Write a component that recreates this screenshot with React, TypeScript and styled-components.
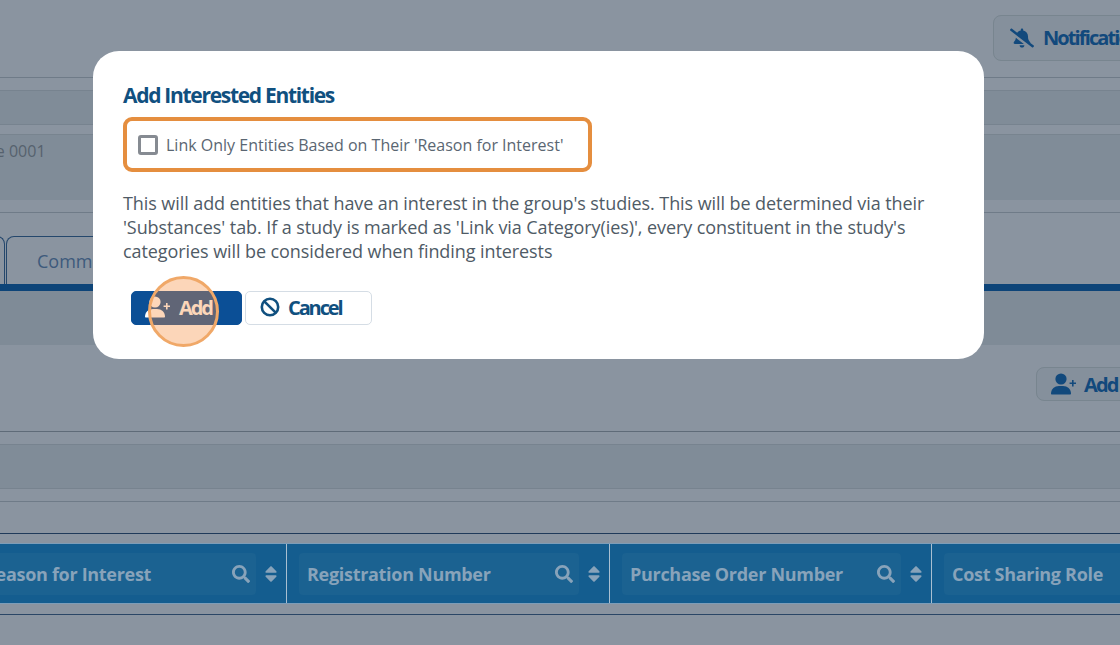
import React from "react";
import styled, { createGlobalStyle } from "styled-components";
import { FaBellSlash, FaSearch, FaSort } from "react-icons/fa";

const colors = {
  page: "#8a94a0",
  darkBand: "#808c98",
  navy: "#12497c",
  title: "#10507f",
  header: "#145d8f",
  headerInput: "#1b6291",
  headerText: "#88a3ba",
  orange: "#e58e3f",
};

const GlobalStyle = createGlobalStyle`
  html, body {
    margin: 0;
    padding: 0;
    width: 1120px;
    height: 645px;
    overflow: hidden;
    background: ${colors.page};
    font-family: "Open Sans", "Liberation Sans", sans-serif;
  }
`;

const Page = styled.div`
  position: relative;
  display: flex;
  flex-direction: column;
  width: 1120px;
  height: 645px;
  overflow: hidden;
`;

const Band = styled.div<{ $h: number; $bg?: string; $line?: string }>`
  box-sizing: border-box;
  flex: none;
  display: flex;
  align-items: center;
  height: ${(p) => p.$h}px;
  background: ${(p) => p.$bg || colors.page};
  border-bottom: ${(p) => (p.$line ? `1px solid ${p.$line}` : "none")};
`;

const ActionRow = styled(Band)<{ $left: number; $lift: number }>`
  padding-left: ${(p) => p.$left}px;
  padding-bottom: ${(p) => p.$lift}px;
`;

const GhostButton = styled.div<{ $h: number; $w: number; $gap: number; $pad: number }>`
  box-sizing: border-box;
  flex: none;
  display: flex;
  align-items: center;
  gap: ${(p) => p.$gap}px;
  width: ${(p) => p.$w}px;
  height: ${(p) => p.$h}px;
  padding-left: ${(p) => p.$pad}px;
  background: #85909c;
  border: 1px solid #78858f;
  border-radius: 8px;
  color: ${colors.navy};
  font-size: 20px;
  font-weight: 700;
  letter-spacing: -1.9px;
  white-space: nowrap;
`;

const SequenceText = styled.div`
  align-self: flex-start;
  flex: none;
  margin: 5px 0 0 -68px;
  color: #56626e;
  font-size: 16px;
  line-height: 22px;
  white-space: nowrap;
`;

const TabRow = styled.div`
  flex: none;
  display: flex;
  align-items: stretch;
  gap: 1px;
  height: 48px;
  background: ${colors.page};
`;

const Tab = styled.div<{ $w: number }>`
  box-sizing: border-box;
  flex: none;
  display: flex;
  align-items: center;
  width: ${(p) => p.$w}px;
  padding-left: 30px;
  border: 1px solid #24476c;
  border-bottom: none;
  border-radius: 8px 8px 0 0;
  color: #3d5a7c;
  font-size: 18px;
  white-space: nowrap;
`;

const EdgeTab = styled(Tab)`
  margin-left: -40px;
`;

const BlueBar = styled.div`
  flex: none;
  height: 7px;
  background: #0d4478;
`;

const TableHead = styled.div`
  box-sizing: border-box;
  flex: none;
  display: flex;
  height: 61px;
  margin-left: -36px;
  background: ${colors.header};
  border-top: 1px solid #7d9db8;
  border-bottom: 1px solid #7d9db8;
`;

const HeadCell = styled.div<{ $w: number }>`
  box-sizing: border-box;
  flex: none;
  display: flex;
  align-items: center;
  width: ${(p) => p.$w}px;
  padding-left: 12px;
  border-right: 1px solid #a9bfd1;
`;

const HeadInput = styled.div`
  box-sizing: border-box;
  flex: 1;
  display: flex;
  align-items: center;
  justify-content: space-between;
  height: 42px;
  padding: 0 6px 0 8px;
  background: ${colors.headerInput};
  border-radius: 4px;
  color: ${colors.headerText};
  font-size: 18px;
  font-weight: 700;
  letter-spacing: -0.3px;
  white-space: nowrap;
`;

const SortMark = styled.div`
  flex: none;
  display: flex;
  justify-content: center;
  width: 30px;
  color: ${colors.headerText};
  font-size: 20px;
`;

const Overlay = styled.div`
  position: absolute;
  inset: 0;
  padding: 51px 0 0 93px;
`;

const Modal = styled.div`
  box-sizing: border-box;
  width: 891px;
  height: 308px;
  padding: 30px 30px 0;
  background: #fff;
  border-radius: 26px;
`;

const Title = styled.h2`
  margin: 0;
  color: ${colors.title};
  font-size: 21px;
  font-weight: 700;
  line-height: 28px;
  letter-spacing: -1.3px;
`;

const HighlightBox = styled.label`
  box-sizing: border-box;
  display: flex;
  align-items: center;
  gap: 8px;
  width: 469px;
  height: 55px;
  margin-top: 8px;
  padding-left: 11px;
  border: 4px solid ${colors.orange};
  border-radius: 9px;
  color: #5a6672;
  font-size: 16px;
`;

const Checkbox = styled.input.attrs({ type: "checkbox" })`
  box-sizing: border-box;
  flex: none;
  width: 20px;
  height: 20px;
  margin: 0;
  appearance: none;
  background: #fff;
  border: 3px solid #868b92;
  border-radius: 3px;
`;

const Description = styled.p`
  margin: 19px 0 0;
  color: #4f5b66;
  font-size: 18px;
  line-height: 24px;
  letter-spacing: -0.08px;
`;

const ButtonRow = styled.div`
  position: relative;
  display: flex;
  gap: 3px;
  margin: 28px 0 0 8px;
`;

const ModalButton = styled.button<{ $primary?: boolean; $w: number; $pad: number }>`
  box-sizing: border-box;
  display: flex;
  align-items: center;
  gap: 8px;
  width: ${(p) => p.$w}px;
  height: 34px;
  padding: 0 0 2px ${(p) => p.$pad}px;
  background: ${(p) => (p.$primary ? "#0b4f96" : "#fff")};
  border: 1px solid ${(p) => (p.$primary ? "#0b4f96" : "#d5dde5")};
  border-radius: 5px;
  color: ${(p) => (p.$primary ? "#fff" : colors.title)};
  font-family: inherit;
  font-size: 20px;
  font-weight: 700;
  letter-spacing: -2.1px;
`;

const ClickMark = styled.div`
  position: absolute;
  left: 17px;
  top: -15px;
  box-sizing: border-box;
  width: 71px;
  height: 71px;
  background: rgba(248, 140, 60, 0.36);
  border: 3px solid #f0a868;
  border-radius: 50%;
`;

const UserPlus = ({ size = 26 }: { size?: number }) => (
  <svg width={size} height={(size * 22) / 26} viewBox="0 0 26 22" fill="currentColor">
    <circle cx="10" cy="6" r="5.6" />
    <path d="M1 21.5c-.6 0-1-.4-1-1C0 16 3.6 13 8 13h4c4.4 0 8 3 8 7.5 0 .6-.4 1-1 1z" />
    <path d="M21 7h1.6v2.4H25V11h-2.4v2.4H21V11h-2.4V9.400H21z" />
  </svg>
);

const BanIcon = () => (
  <svg width="20" height="20" viewBox="0 0 20 20" fill="none" stroke="currentColor" strokeWidth="2.6">
    <circle cx="10" cy="10" r="8.2" />
    <path d="M4.300 4.300l11.400 11.400" />
  </svg>
);

const columns = [
  { label: "Reason for Interest", w: 323, search: true },
  { label: "Registration Number", w: 323, search: true },
  { label: "Purchase Order Number", w: 322, search: true },
  { label: "Cost Sharing Role", w: 323, search: false },
];

export default function App() {
  return (
    <Page>
      <GlobalStyle />
      <ActionRow $h={78} $left={993} $lift={2} $line="#6f7b88">
        <GhostButton $w={180} $h={46} $gap={9} $pad={16}>
          <FaBellSlash size={24} />
          Notifications
        </GhostButton>
      </ActionRow>
      <Band $h={13} $line="#77838f" />
      <Band $h={34} $bg={colors.darkBand} $line="#77838f" />
      <Band $h={10} $line="#78848f" />
      <Band $h={65} $bg={colors.darkBand}>
        <SequenceText>Sequence 0001</SequenceText>
      </Band>
      <Band $h={13} $line="#6f7b88" />
      <Band $h={23} />
      <TabRow>
        <EdgeTab $w={45} />
        <Tab $w={200}>Comments</Tab>
      </TabRow>
      <BlueBar />
      <Band $h={54} $bg="#7f8b97" />
      <ActionRow $h={87} $left={1036} $lift={8} $line="#5f6b78">
        <GhostButton $w={100} $h={34} $gap={7} $pad={14}>
          <UserPlus />
          Add
        </GhostButton>
      </ActionRow>
      <Band $h={13} $line="#77838f" />
      <Band $h={44} $bg={colors.darkBand} $line="#77838f" />
      <Band $h={13} $line="#6f7b88" />
      <Band $h={32} $line="#1f3a5a" />
      <Band $h={9} />
      <TableHead>
        {columns.map((c) => (
          <HeadCell key={c.label} $w={c.w}>
            <HeadInput>
              {c.label}
              {c.search && <FaSearch size={18} />}
            </HeadInput>
            {c.search && (
              <SortMark>
                <FaSort />
              </SortMark>
            )}
          </HeadCell>
        ))}
      </TableHead>
      <Band $h={11} $line="#2a4666" />
      <Band $h={30} />
      <Overlay>
        <Modal>
          <Title>Add Interested Entities</Title>
          <HighlightBox>
            <Checkbox />
            Link Only Entities Based on Their 'Reason for Interest'
          </HighlightBox>
          <Description>
            This will add entities that have an interest in the group's studies. This will be
            determined via their 'Substances' tab. If a study is marked as 'Link via Category(ies)',
            every constituent in the study's categories will be considered when finding interests
          </Description>
          <ButtonRow>
            <ModalButton $primary $w={111} $pad={13}>
              <UserPlus />
              Add
            </ModalButton>
            <ModalButton $w={127} $pad={14}>
              <BanIcon />
              Cancel
            </ModalButton>
            <ClickMark />
          </ButtonRow>
        </Modal>
      </Overlay>
    </Page>
  );
}
